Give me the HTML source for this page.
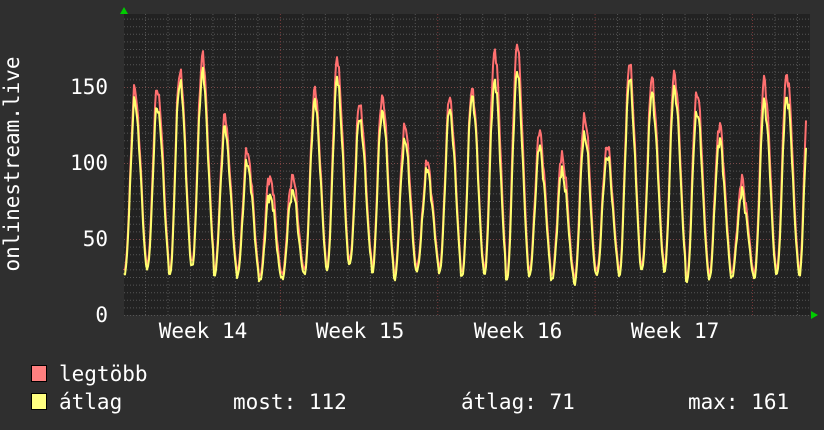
<!DOCTYPE html>
<html><head><meta charset="utf-8"><style>
html,body{margin:0;padding:0;background:#2f2f2f;}
svg{display:block}
text{font-family:"DejaVu Sans Mono","Liberation Mono",monospace;fill:#fff;font-size:21px}
</style></head><body>
<svg id="g" width="824" height="430" xmlns="http://www.w3.org/2000/svg">
<rect width="824" height="430" fill="#2f2f2f"/>
<rect x="124" y="14" width="686" height="301" fill="#222"/>
<g id="grid"></g>
<path id="red" fill="none" stroke="#ff7070" stroke-width="2" stroke-linejoin="round"/>
<path id="yel" fill="none" stroke="#ffff70" stroke-width="2" stroke-linejoin="round"/>
<polygon points="120,14 128,14 124,7" fill="#00cc00"/>
<polygon points="811,311 811,319 818,315" fill="#00cc00"/>
<text x="108" y="322" text-anchor="end">0</text>
<text x="108" y="246" text-anchor="end">50</text>
<text x="108" y="170" text-anchor="end">100</text>
<text x="108" y="94" text-anchor="end">150</text>
<text transform="translate(19,164) rotate(-90)" text-anchor="middle">onlinestream.live</text>
<text x="203" y="338" text-anchor="middle">Week 14</text>
<text x="360" y="338" text-anchor="middle">Week 15</text>
<text x="518" y="338" text-anchor="middle">Week 16</text>
<text x="675" y="338" text-anchor="middle">Week 17</text>
<rect x="31.5" y="365.5" width="15" height="16" fill="#ff8080" stroke="#000"/>
<rect x="31.5" y="393.5" width="15" height="16" fill="#ffff80" stroke="#000"/>
<text x="59" y="381">legtöbb</text>
<text x="59" y="409">átlag</text>
<text x="233" y="409">most: 112</text>
<text x="461" y="409">átlag: 71</text>
<text x="688" y="409">max: 161</text>
</svg>
<script>
var g=document.getElementById("grid"),s="";
for(var i=0;i<40;i++){var y=315-7.6*i;if(y<15)break;var maj=(i%10==0&&i>0);
s+='<line x1="124" x2="810" y1="'+(y+.5)+'" y2="'+(y+.5)+'" stroke="'+(maj?'#7a4a4a':'#555')+'" stroke-dasharray="1,2"/>';}
for(var k=0;k<31;k++){var x=145.5+22.48*k;if(x>809)break;var wk=(k%7==6);
s+='<line y1="14" y2="315" x1="'+x+'" x2="'+x+'" stroke="'+(wk?'#7a3a3a':'#555')+'" stroke-dasharray="1,2"/>';}
g.innerHTML=s;
var H=[140,138,155,160,122,100,80,82,140,155,130,135,115,95,135,145,155,160,110,95,120,105,155,145,150,135,115,80,140,145,150];
var R=[148,150,162,171,130,108,92,92,148,168,140,145,125,100,143,150,175,178,120,105,132,112,165,155,160,148,125,88,155,160,170];
var T=[28,30,26,33,27,25,22,24,28,30,33,27,24,30,28,25,27,24,26,23,20,27,26,30,28,22,24,25,24,27,26];
function val(x,arr,red){var j=Math.round((x-135)/22.48);var px=135+22.48*j;var d=x-px;
if(d>12){j++;px+=22.48;d=x-px;}
var jj=Math.max(0,Math.min(arr.length-1,j));var h=arr[jj];var tr=T[jj]+(red?3:0);var sh;
if(d<=0){if(d<-10)sh=0;else{sh=(1+Math.cos(Math.PI*d/10))/2;}}
else{var t=Math.min(d,12.5)/12.5;sh=(1+Math.cos(Math.PI*t))/2;sh=sh*0.85+0.15*(1-t)*(t<1?1:0);}
var n=Math.sin(x*1.7+jj)*3+Math.sin(x*0.9)*2.5+Math.sin(x*3.1)*1.5;
return tr+(h-tr)*sh+n*Math.max(sh,0.25);}
function path(arr,red){var p="";for(var x=124;x<=806;x+=1){var v=val(x,arr,red);if(x>=800)v=Math.min(v,26+(x-800)*(red?17:14));p+=(x==124?"M":"L")+x+","+(315-v*1.52).toFixed(1);}return p;}
document.getElementById("red").setAttribute("d",path(R,true));
document.getElementById("yel").setAttribute("d",path(H,false));
</script>
</body></html>
